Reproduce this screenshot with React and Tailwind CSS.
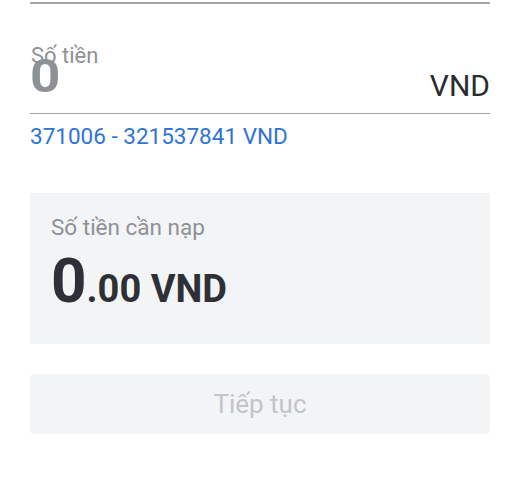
export default function App() {
  return (
    <div className="w-[520px] h-[486px] bg-white px-[30px] font-['Roboto',sans-serif]">
      <div className="pt-[2px]">
        <div className="h-[2px] bg-[#a3a5a8]" />
      </div>
      <div className="relative h-[110px] border-b border-[#a3a5a8] flex items-end justify-between pb-[12px]">
        <span className="text-[46px] leading-none font-bold text-[#8e9195] mb-[2px] scale-x-[1.15] origin-left">0</span>
        <span className="absolute left-[1px] top-[41px] text-[22px] leading-none text-[#8e9195]">Số tiền</span>
        <span className="text-[30px] leading-none text-[#2a2c30]">VND</span>
      </div>
      <div className="mt-[9px] text-[22.5px] leading-[26px] text-[#2f73d6]">371006 - 321537841 VND</div>
      <div className="mt-[44px] h-[151px] bg-[#f3f4f6] px-[21px] pt-[21px]">
        <div className="text-[22.5px] leading-[26px] text-[#8e9195]">Số tiền cần nạp</div>
        <div className="mt-[10px] flex items-baseline font-bold text-[#2d3036] leading-none">
          <span className="text-[62px]">0</span>
          <span className="text-[38px]">.00 VND</span>
        </div>
      </div>
      <div className="mt-[30px] h-[60px] rounded-[4px] bg-[#f3f4f6] flex items-center justify-center text-[26px] text-[#c2c4c7]">
        Tiếp tục
      </div>
    </div>
  );
}
